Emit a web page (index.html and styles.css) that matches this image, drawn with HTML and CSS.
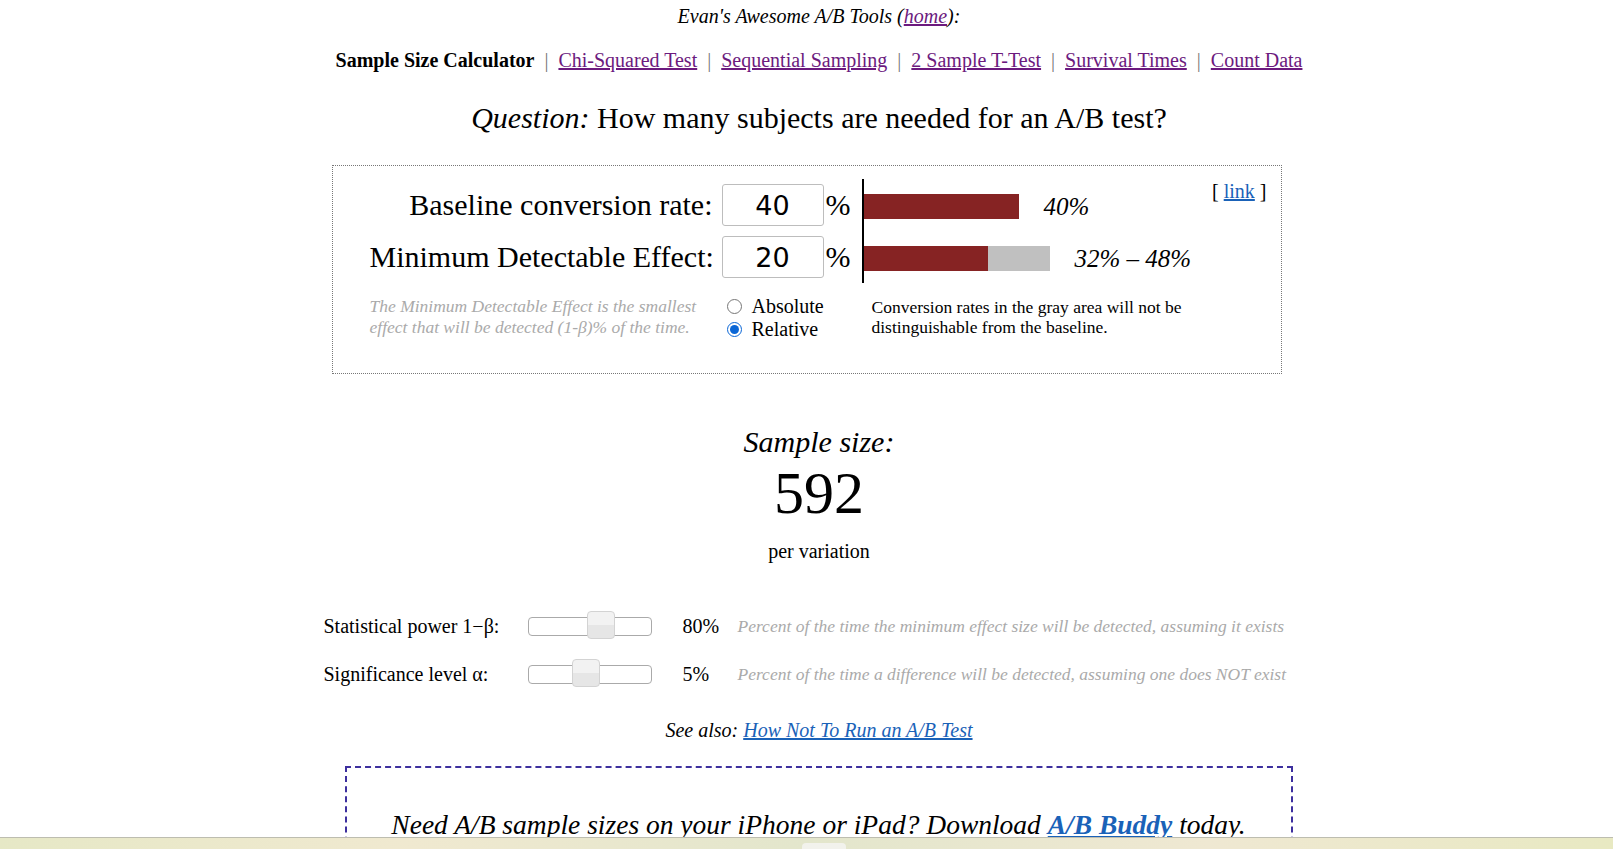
FILE: index.html
```html
<!DOCTYPE html>
<html lang="en">
<head>
<meta charset="utf-8">
<title>Sample Size Calculator</title>
<link rel="stylesheet" href="styles.css">
</head>
<body>
<p class="toolsline centered">Evan's Awesome A/B Tools (<a href="#" class="visited">home</a>):</p>
<nav class="nav centered">
  <b>Sample Size Calculator</b><span class="sep">|</span><a href="#" class="visited">Chi-Squared Test</a><span class="sep">|</span><a href="#" class="visited">Sequential Sampling</a><span class="sep">|</span><a href="#" class="visited">2 Sample T-Test</a><span class="sep">|</span><a href="#" class="visited">Survival Times</a><span class="sep">|</span><a href="#" class="visited">Count Data</a>
</nav>
<h1 class="question centered"><em>Question:</em> How many subjects are needed for an A/B test?</h1>

<div class="calc">
  <div class="lbl row1">Baseline conversion rate:</div>
  <input class="num row1" type="text" value="40">
  <div class="pct row1">%</div>

  <div class="lbl row2">Minimum Detectable Effect:</div>
  <input class="num row2" type="text" value="20">
  <div class="pct row2">%</div>

  <div class="chart">
    <div class="barrow">
      <div class="bar"><span class="red" style="width:155px"></span></div>
      <span class="barval">40%</span>
    </div>
    <div class="barrow">
      <div class="bar"><span class="red" style="width:124px"></span><span class="gray" style="width:62px"></span></div>
      <span class="barval">32% – 48%</span>
    </div>
  </div>
  <div class="permalink">[ <a href="#" class="blue">link</a> ]</div>

  <div class="note">The Minimum Detectable Effect is the smallest<br>effect that will be detected (1-β)% of the time.</div>
  <div class="modes">
    <label class="mode"><input type="radio" name="mde"> Absolute</label>
    <label class="mode"><input type="radio" name="mde" checked> Relative</label>
  </div>
  <div class="explain">Conversion rates in the gray area will not be<br>distinguishable from the baseline.</div>
</div>

<div class="result centered">
  <div class="result-title">Sample size:</div>
  <div class="result-num">592</div>
  <div class="result-unit">per variation</div>
</div>

<div class="params">
  <div class="plabel">Statistical power 1−β:</div>
  <div class="slider"><span class="thumb" style="left:58px"></span></div>
  <div class="pval">80%</div>
  <div class="pdesc">Percent of the time the minimum effect size will be detected, assuming it exists</div>

  <div class="plabel">Significance level α:</div>
  <div class="slider"><span class="thumb" style="left:43px"></span></div>
  <div class="pval">5%</div>
  <div class="pdesc">Percent of the time a difference will be detected, assuming one does NOT exist</div>
</div>

<p class="seealso centered">See also: <a href="#" class="blue">How Not To Run an A/B Test</a></p>

<div class="promo">
  <p>Need A/B sample sizes on your iPhone or iPad? Download <a href="#" class="blue"><b>A/B Buddy</b></a> today.</p>
</div>

<div class="bottombar"><span class="bartab"></span></div>
</body>
</html>
```

FILE: styles.css
```css
html, body {
  margin: 0;
  padding: 0;
  background: #fff;
}
body {
  font-family: "Liberation Serif", "Times New Roman", serif;
  font-size: 20px;
  color: #000;
  overflow: hidden;
}
a { color: #1a62b8; }
a.visited { color: #6c1a7e; }
a.blue { color: #1a62b8; }

.centered {
  padding-left: 25px;
  text-align: center;
}

.toolsline {
  margin: 5px 0 0;
  font-style: italic;
  line-height: 23px;
}
.nav {
  margin-top: 21px;
  line-height: 23px;
}
.sep {
  color: #777;
  margin: 0 10px;
}
.question {
  margin: 29px 0 0;
  font-size: 30px;
  font-weight: normal;
  line-height: 34px;
}

/* calculator box */
.calc {
  box-sizing: border-box;
  width: 950px;
  margin: 30px auto 0;
  border: 1px dotted #777;
  padding: 18px 14px 32px 37px;
  display: grid;
  grid-template-columns: 352px 102px 38px 1fr;
  grid-template-rows: 42px 42px auto;
  row-gap: 10px;
}
.row1 { grid-row: 1; }
.row2 { grid-row: 2; }
.lbl {
  grid-column: 1;
  font-size: 30px;
  line-height: 42px;
  text-align: right;
  padding-right: 9px;
  white-space: nowrap;
}
.num {
  grid-column: 2;
  box-sizing: border-box;
  width: 102px;
  height: 42px;
  margin: 0;
  border: 1px solid #bdbdbd;
  border-radius: 3px;
  padding: 0;
  font-family: "DejaVu Sans", Verdana, sans-serif;
  font-size: 27px;
  text-align: center;
  color: #000;
  background: #fff;
}
.pct {
  grid-column: 3;
  font-size: 30px;
  line-height: 42px;
  padding-left: 2px;
}
.chart {
  grid-column: 4;
  grid-row: 1 / 3;
  align-self: stretch;
  margin: -5px 0 -5px;
  border-left: 2px solid #000;
  padding-top: 15px;
  display: flex;
  flex-direction: column;
  gap: 27px;
}
.barrow {
  display: flex;
  align-items: center;
  height: 25px;
}
.bar {
  display: flex;
  height: 25px;
}
.bar .red { display: block; height: 25px; background: #862323; }
.bar .gray { display: block; height: 25px; background: #c0c0c0; }
.barval {
  margin-left: 25px;
  font-size: 25px;
  font-style: italic;
  white-space: nowrap;
}
.permalink {
  grid-column: 4;
  grid-row: 1;
  justify-self: end;
  align-self: start;
  margin-top: -4px;
  line-height: 23px;
}
.note {
  grid-column: 1;
  grid-row: 3;
  padding-top: 8px;
  font-size: 17.5px;
  line-height: 21px;
  font-style: italic;
  color: #aaa;
  white-space: nowrap;
}
.modes {
  grid-column: 2 / 4;
  grid-row: 3;
  padding-top: 7px;
  display: flex;
  flex-direction: column;
}
.mode {
  line-height: 23px;
  white-space: nowrap;
  display: flex;
  align-items: center;
}
.mode input {
  width: 15px;
  height: 15px;
  margin: 0 10px 0 5px;
  accent-color: #0a66d6;
}
.explain {
  grid-column: 4;
  grid-row: 3;
  padding-top: 9px;
  padding-left: 10px;
  font-size: 17.5px;
  line-height: 20px;
  white-space: nowrap;
}

/* result */
.result {
  margin-top: 51px;
}
.result-title {
  font-size: 30px;
  font-style: italic;
  line-height: 34px;
}
.result-num {
  font-size: 60px;
  line-height: 68px;
}
.result-unit {
  margin-top: 13px;
  line-height: 23px;
}

/* parameters */
.params {
  width: 966px;
  margin: 52px auto 0;
  display: grid;
  grid-template-columns: 204px 155px 55px 1fr;
  grid-auto-rows: 23px;
  row-gap: 25px;
  align-items: center;
}
.plabel { white-space: nowrap; }
.slider {
  position: relative;
  box-sizing: border-box;
  width: 124px;
  height: 19px;
  border: 1px solid #aaa;
  border-radius: 4px;
  background: #fff;
}
.thumb {
  position: absolute;
  top: -7px;
  box-sizing: border-box;
  width: 28px;
  height: 28px;
  border: 1px solid #d3d3d3;
  border-radius: 4px;
  background: linear-gradient(#f2f2f2 0%, #f2f2f2 50%, #e6e6e6 50%, #e6e6e6 100%);
}
.pval { white-space: nowrap; }
.pdesc {
  font-size: 17.5px;
  font-style: italic;
  color: #aaa;
  white-space: nowrap;
}

.seealso {
  margin: 33px 0 0;
  font-style: italic;
  line-height: 23px;
}

.promo {
  box-sizing: border-box;
  width: 948px;
  margin: 24px 0 0 calc(50% - 462px);
  border: 2px dashed #3d2f9e;
  padding: 41px 0 40px;
  text-align: center;
}
.promo p {
  margin: 0;
  font-size: 27.5px;
  font-style: italic;
  line-height: 32px;
}

.bottombar {
  position: fixed;
  left: 0;
  right: 0;
  bottom: 0;
  height: 11px;
  border-top: 1px solid #bdbdb0;
  background: linear-gradient(90deg, #e6e8c6 0%, #f0e9d0 25%, #e3e6cc 50%, #efe8d2 75%, #e8e9c2 100%);
}
.bartab {
  position: absolute;
  left: 802px;
  bottom: 0;
  width: 44px;
  height: 6px;
  border-radius: 4px 4px 0 0;
  background: #f2f2ec;
}
```
